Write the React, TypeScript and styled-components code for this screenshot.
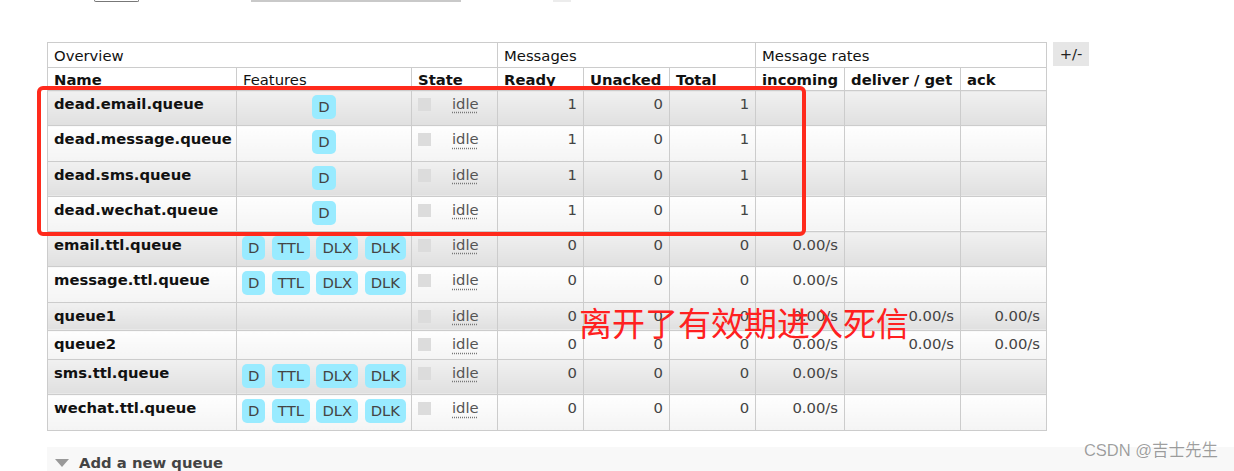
import React from 'react';
import styled, { createGlobalStyle } from 'styled-components';

const GlobalStyle = createGlobalStyle`
  html, body {
    margin: 0;
    padding: 0;
    background: #fff;
  }
  body {
    font-family: "DejaVu Sans", Verdana, sans-serif;
    font-size: 14.8px;
    color: #444;
  }
`;

const Page = styled.div`
  position: relative;
  width: 1234px;
  height: 471px;
  overflow: hidden;
`;

/* the bottom edge of the filter bar that sits above the table */
const FilterStrip = styled.div`
  display: flex;
  align-items: flex-start;
  height: 2px;
  overflow: hidden;
`;

const PageSizeSelect = styled.div`
  margin-left: 94px;
  width: 45px;
  height: 2px;
  box-sizing: border-box;
  border: 1px solid #777;
  border-top: none;
  border-radius: 0 0 2px 2px;
`;

const FilterInput = styled.div`
  margin-left: 112px;
  width: 210px;
  height: 2px;
  background: #c9c9c9;
`;

const RegexBox = styled.div`
  margin-left: 92px;
  width: 18px;
  height: 2px;
  background: #ececec;
`;

const Body = styled.div`
  padding: 40px 0 0 47px;
`;

const TableRow = styled.div`
  display: flex;
  align-items: flex-start;
  gap: 6px;
`;

const TableWrap = styled.div`
  position: relative;
`;

const List = styled.table`
  border-collapse: collapse;
  table-layout: fixed;
  width: 999px;
`;

const HeadRow = styled.tr<{ $h: number }>`
  height: ${p => p.$h}px;
`;

const Th = styled.th<{ $bold?: boolean; $top: number }>`
  border: 1px solid #ccc;
  padding: ${p => p.$top}px 6px 0;
  text-align: left;
  vertical-align: top;
  line-height: 18px;
  font-weight: ${p => (p.$bold ? 'bold' : 'normal')};
  color: #111;
  white-space: nowrap;
  background: #fff;
`;

const Row = styled.tr<{ $short?: boolean }>`
  height: ${p => (p.$short ? 28.6 : 35.3)}px;
`;

const Td = styled.td<{ $alt: boolean; $right?: boolean }>`
  border: 1px solid #ccc;
  padding: 4px 6px 0;
  vertical-align: top;
  line-height: 18px;
  white-space: nowrap;
  text-align: ${p => (p.$right ? 'right' : 'left')};
  color: #444;
  background: ${p =>
    p.$alt
      ? 'linear-gradient(to bottom, #f1f1f1 0%, #e0e0e0 100%)'
      : 'linear-gradient(to bottom, #fefefe 0%, #f4f4f4 100%)'};
`;

const QueueName = styled.span`
  font-weight: bold;
  color: #111;
`;

const Tags = styled.div`
  display: flex;
  justify-content: center;
  gap: 6.5px;
`;

const Tag = styled.abbr`
  display: inline-block;
  height: 24px;
  line-height: 24px;
  padding: 0 6px;
  border-radius: 5px;
  background: #99ebff;
  color: #444;
  text-decoration: none;
`;

const StateBox = styled.div`
  display: flex;
  align-items: flex-start;
  gap: 21px;
`;

const StateSquare = styled.span`
  width: 13px;
  height: 13px;
  margin-top: 3px;
  background: #dcdcdc;
`;

const StateLabel = styled.abbr`
  color: #555;
  text-decoration: underline dotted #777;
  text-underline-offset: 3px;
`;

const PlusMinus = styled.span`
  width: 36px;
  height: 24px;
  line-height: 24px;
  text-align: center;
  background: #e6e6e6;
  color: #222;
`;

const Highlight = styled.div`
  position: absolute;
  left: -10px;
  top: 44px;
  width: 769px;
  height: 150px;
  box-sizing: border-box;
  border: 4px solid #ff2a1c;
  border-radius: 6px;
  pointer-events: none;
`;

const Annotation = styled.div`
  position: absolute;
  left: 532px;
  top: 264px;
  font-family: "Noto Sans CJK SC", sans-serif;
  font-size: 33px;
  line-height: 33px;
  color: #ff2020;
  white-space: nowrap;
  pointer-events: none;
`;

const Section = styled.div`
  margin-top: 16px;
  height: 40px;
  background: #f8f8f8;
`;

const SectionHeader = styled.h2`
  display: flex;
  align-items: center;
  gap: 10px;
  margin: 0;
  padding: 7px 0 0 8px;
  font-size: 14.8px;
  line-height: 18px;
  font-weight: bold;
  color: #444;
`;

const Caret = styled.span`
  width: 0;
  height: 0;
  border-left: 7px solid transparent;
  border-right: 7px solid transparent;
  border-top: 8px solid #999;
`;

const Watermark = styled.div`
  position: absolute;
  right: 16px;
  top: 442px;
  font-family: "Liberation Sans", "Noto Sans CJK SC", sans-serif;
  font-size: 16.5px;
  line-height: 17px;
  color: rgba(0, 0, 0, 0.38);
  white-space: nowrap;
`;

type Queue = {
  name: string;
  features: string[];
  ready: number;
  unacked: number;
  total: number;
  incoming: string;
  deliver: string;
  ack: string;
};

const TTL = ['D', 'TTL', 'DLX', 'DLK'];

const queues: Queue[] = [
  { name: 'dead.email.queue', features: ['D'], ready: 1, unacked: 0, total: 1, incoming: '', deliver: '', ack: '' },
  { name: 'dead.message.queue', features: ['D'], ready: 1, unacked: 0, total: 1, incoming: '', deliver: '', ack: '' },
  { name: 'dead.sms.queue', features: ['D'], ready: 1, unacked: 0, total: 1, incoming: '', deliver: '', ack: '' },
  { name: 'dead.wechat.queue', features: ['D'], ready: 1, unacked: 0, total: 1, incoming: '', deliver: '', ack: '' },
  { name: 'email.ttl.queue', features: TTL, ready: 0, unacked: 0, total: 0, incoming: '0.00/s', deliver: '', ack: '' },
  { name: 'message.ttl.queue', features: TTL, ready: 0, unacked: 0, total: 0, incoming: '0.00/s', deliver: '', ack: '' },
  { name: 'queue1', features: [], ready: 0, unacked: 0, total: 0, incoming: '0.00/s', deliver: '0.00/s', ack: '0.00/s' },
  { name: 'queue2', features: [], ready: 0, unacked: 0, total: 0, incoming: '0.00/s', deliver: '0.00/s', ack: '0.00/s' },
  { name: 'sms.ttl.queue', features: TTL, ready: 0, unacked: 0, total: 0, incoming: '0.00/s', deliver: '', ack: '' },
  { name: 'wechat.ttl.queue', features: TTL, ready: 0, unacked: 0, total: 0, incoming: '0.00/s', deliver: '', ack: '' },
];

const colWidths = [189, 175, 86, 86, 86, 86, 89, 116, 86];

export default function App() {
  return (
    <Page>
      <GlobalStyle />
      <FilterStrip>
        <PageSizeSelect />
        <FilterInput />
        <RegexBox />
      </FilterStrip>

      <Body>
        <TableRow>
          <TableWrap>
            <List>
              <colgroup>
                {colWidths.map((w, i) => (
                  <col key={i} style={{ width: w }} />
                ))}
              </colgroup>
              <thead>
                <HeadRow $h={25}>
                  <Th colSpan={3} $top={4}>Overview</Th>
                  <Th colSpan={3} $top={4}>Messages</Th>
                  <Th colSpan={3} $top={4}>Message rates</Th>
                </HeadRow>
                <HeadRow $h={23}>
                  <Th $bold $top={3}>Name</Th>
                  <Th $top={3}>Features</Th>
                  <Th $bold $top={3}>State</Th>
                  <Th $bold $top={3}>Ready</Th>
                  <Th $bold $top={3}>Unacked</Th>
                  <Th $bold $top={3}>Total</Th>
                  <Th $bold $top={3}>incoming</Th>
                  <Th $bold $top={3}>deliver / get</Th>
                  <Th $bold $top={3}>ack</Th>
                </HeadRow>
              </thead>
              <tbody>
                {queues.map((q, i) => {
                  const alt = i % 2 === 0;
                  return (
                    <Row key={q.name} $short={q.features.length === 0}>
                      <Td $alt={alt}>
                        <QueueName>{q.name}</QueueName>
                      </Td>
                      <Td $alt={alt}>
                        <Tags>
                          {q.features.map(f => (
                            <Tag key={f}>{f}</Tag>
                          ))}
                        </Tags>
                      </Td>
                      <Td $alt={alt}>
                        <StateBox>
                          <StateSquare />
                          <StateLabel>idle</StateLabel>
                        </StateBox>
                      </Td>
                      <Td $alt={alt} $right>{q.ready}</Td>
                      <Td $alt={alt} $right>{q.unacked}</Td>
                      <Td $alt={alt} $right>{q.total}</Td>
                      <Td $alt={alt} $right>{q.incoming}</Td>
                      <Td $alt={alt} $right>{q.deliver}</Td>
                      <Td $alt={alt} $right>{q.ack}</Td>
                    </Row>
                  );
                })}
              </tbody>
            </List>
            <Highlight />
            <Annotation>离开了有效期进入死信</Annotation>
          </TableWrap>
          <PlusMinus>+/-</PlusMinus>
        </TableRow>

        <Section>
          <SectionHeader>
            <Caret />
            Add a new queue
          </SectionHeader>
        </Section>
      </Body>

      <Watermark>CSDN @吉士先生</Watermark>
    </Page>
  );
}
